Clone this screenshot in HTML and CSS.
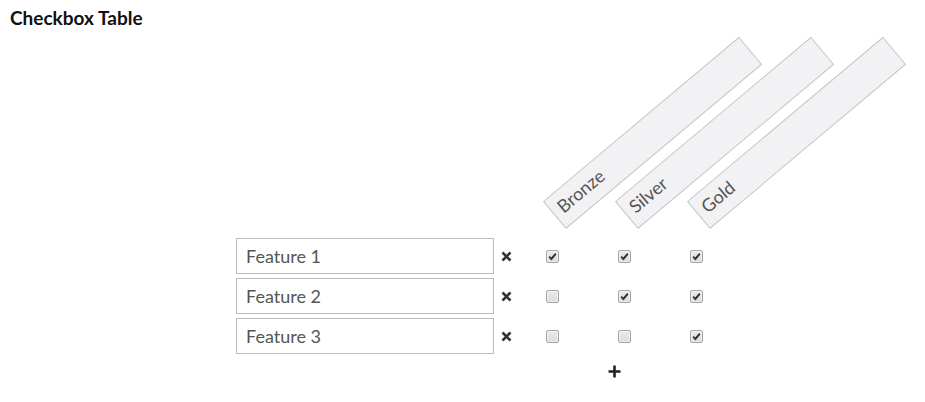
FILE: index.html
```html
<!DOCTYPE html>
<html>
<head>
<meta charset="utf-8">
<link rel="stylesheet" href="styles.css">
</head>
<body>
<h3 class="title">Checkbox Table</h3>
<div class="table">
  <div class="head-spacer"></div>
  <div class="head-spacer"></div>
  <div class="head-cell"><div class="head-box">Bronze</div></div>
  <div class="head-cell"><div class="head-box">Silver</div></div>
  <div class="head-cell"><div class="head-box">Gold</div></div>

  <input class="feature" type="text" value="Feature 1">
  <span class="remove"><svg viewBox="0 0 11 11" width="11" height="11"><path d="M1.5 1.5 L9.5 9.5 M9.5 1.5 L1.5 9.5"/></svg></span>
  <span class="cb-cell"><span class="cb on"><svg viewBox="0 0 13 13"><path d="M3.2 6.6 L5.4 9 L9.8 3.6"/></svg></span></span>
  <span class="cb-cell"><span class="cb on"><svg viewBox="0 0 13 13"><path d="M3.2 6.6 L5.4 9 L9.8 3.6"/></svg></span></span>
  <span class="cb-cell"><span class="cb on"><svg viewBox="0 0 13 13"><path d="M3.2 6.6 L5.4 9 L9.8 3.6"/></svg></span></span>

  <input class="feature" type="text" value="Feature 2">
  <span class="remove"><svg viewBox="0 0 11 11" width="11" height="11"><path d="M1.5 1.5 L9.5 9.5 M9.5 1.5 L1.5 9.5"/></svg></span>
  <span class="cb-cell"><span class="cb"></span></span>
  <span class="cb-cell"><span class="cb on"><svg viewBox="0 0 13 13"><path d="M3.2 6.6 L5.4 9 L9.8 3.6"/></svg></span></span>
  <span class="cb-cell"><span class="cb on"><svg viewBox="0 0 13 13"><path d="M3.2 6.6 L5.4 9 L9.8 3.6"/></svg></span></span>

  <input class="feature" type="text" value="Feature 3">
  <span class="remove"><svg viewBox="0 0 11 11" width="11" height="11"><path d="M1.5 1.5 L9.5 9.5 M9.5 1.5 L1.5 9.5"/></svg></span>
  <span class="cb-cell"><span class="cb"></span></span>
  <span class="cb-cell"><span class="cb"></span></span>
  <span class="cb-cell"><span class="cb on"><svg viewBox="0 0 13 13"><path d="M3.2 6.6 L5.4 9 L9.8 3.6"/></svg></span></span>

  <span class="add"><svg viewBox="0 0 13 13" width="13" height="13"><path d="M6.5 0.5 V12.5 M0.5 6.5 H12.5"/></svg></span>
</div>
</body>
</html>
```
FILE: styles.css
```css
html, body {
  margin: 0;
  background: #fff;
  font-family: Lato, "Open Sans", sans-serif;
  color: #555;
  overflow: hidden;
}
.title {
  margin: 0;
  padding: 8px 10px 0;
  font-size: 19px;
  line-height: 20px;
  font-weight: 700;
  color: #111;
}
.table {
  margin-left: 236px;
  display: grid;
  grid-template-columns: 258px 22px 72px 72px 72px;
  grid-template-rows: 206px 36px 36px 36px auto;
  row-gap: 4px;
}
.head-cell {
  position: relative;
}
.head-box {
  position: absolute;
  left: 50px;
  bottom: 5px;
  width: 256px;
  height: 36px;
  box-sizing: border-box;
  border: 1px solid #c8c8c8;
  background: #f2f2f4;
  transform-origin: 0 100%;
  transform: rotate(-40deg);
  font-size: 18px;
  line-height: 30px;
  padding-left: 7px;
  color: #555;
  white-space: nowrap;
}
.feature {
  box-sizing: border-box;
  width: 258px;
  height: 36px;
  margin: 0;
  border: 1px solid #bbb;
  padding: 0 9px 1px;
  font-family: Lato, sans-serif;
  font-size: 18px;
  color: #555;
  background: #fff;
  outline: none;
}
.remove {
  display: flex;
  align-items: center;
  padding-left: 7px;
}
.remove svg {
  stroke: #333;
  stroke-width: 2.6;
  fill: none;
}
.cb-cell {
  display: flex;
  align-items: center;
  justify-content: center;
}
.cb {
  box-sizing: border-box;
  width: 13px;
  height: 13px;
  border: 1px solid #a6a6a6;
  border-radius: 2px;
  background: linear-gradient(#ececec, #dcdcdc);
  box-shadow: inset 0 0 0 1px rgba(255,255,255,0.4);
  position: relative;
}
.cb svg {
  position: absolute;
  left: -1px;
  top: -1px;
  width: 13px;
  height: 13px;
  fill: none;
  stroke: #333;
  stroke-width: 2;
}
.add {
  grid-column: 4;
  display: block;
  margin: 7px 0 0 20px;
  width: 13px;
  height: 13px;
}
.add svg {
  display: block;
  stroke: #222;
  stroke-width: 2.6;
  fill: none;
}
```
